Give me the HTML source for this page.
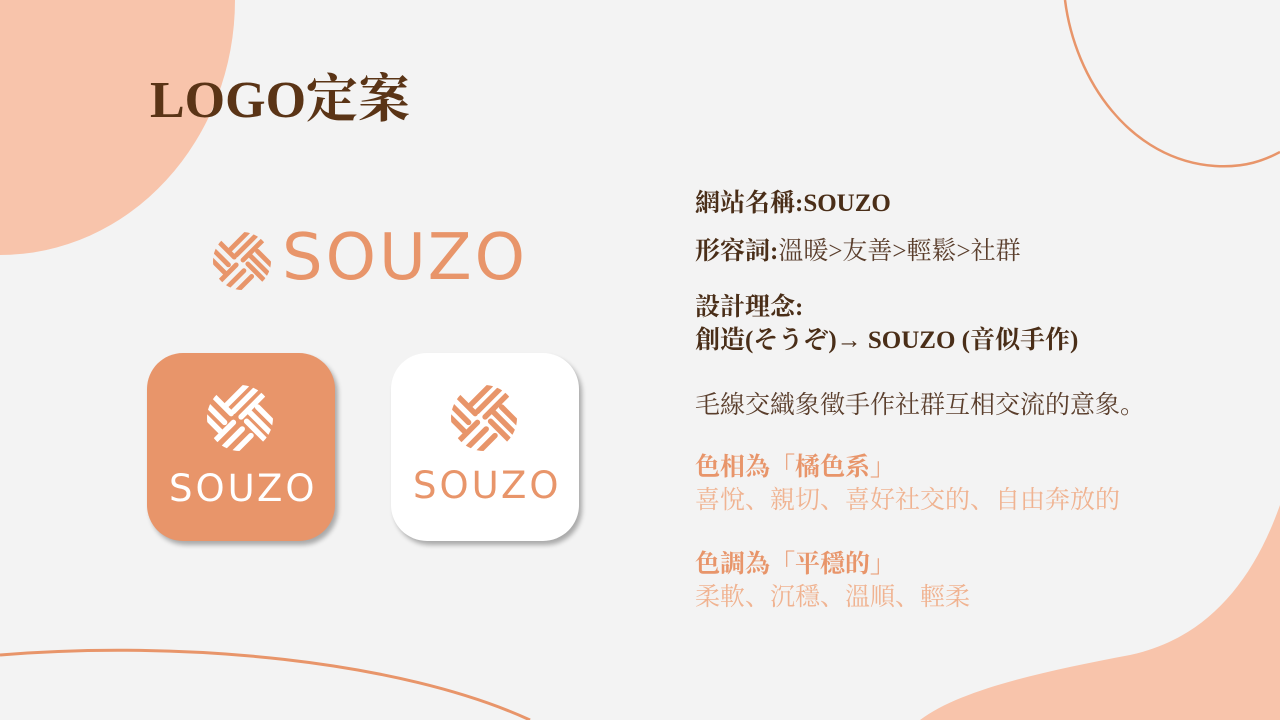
<!DOCTYPE html>
<html><head><meta charset="utf-8"><style>
html,body{margin:0;padding:0}
body{width:1280px;height:720px;background:#f3f3f3;position:relative;overflow:hidden;font-family:"Liberation Serif","Noto Serif CJK SC",serif}
.bg{position:absolute;left:0;top:0;z-index:0}
.t{position:absolute;white-space:nowrap;line-height:1;z-index:2}
.title{left:150px;top:75px;font-size:52px;font-weight:700;color:#5a3416;font-family:"Liberation Serif","Noto Serif CJK SC",serif}
.b{font-weight:bold;color:#4a2e18}
.r{color:#5a3e2c;font-weight:normal}
.o{color:#e8956a}
.ol{color:#f0b391}
.s{font-size:25px}
.logo{font-family:"DejaVu Sans","Liberation Sans",sans-serif;color:#e8956a;letter-spacing:3px}
.app{position:absolute;width:188px;height:188px;border-radius:36px;box-shadow:3px 4px 5px rgba(0,0,0,.3);z-index:1}
.mk{position:absolute;z-index:2}
</style></head><body>
<svg class="bg" width="1280" height="720" viewBox="0 0 1280 720">
<ellipse cx="0" cy="0" rx="235" ry="255" fill="#f8c4ab"/>
<path d="M1065 0 C1075 80 1130 160 1215 166 C1245 168 1265 160 1280 152" fill="none" stroke="#e8956a" stroke-width="2.5"/>
<path d="M1280 505 C1250 590 1200 640 1130 655 C1040 672 960 690 920 720 L1280 720 Z" fill="#f8c4ab"/>
<path d="M0 655 C180 640 400 660 530 720" fill="none" stroke="#e8956a" stroke-width="3"/>
</svg>
<div class="t title">LOGO定案</div>

<svg class="mk" style="left:213px;top:232px" width="58" height="58" viewBox="0 0 60 60"><clipPath id="c1"><circle cx="30" cy="30" r="30"/></clipPath><g clip-path="url(#c1)" stroke="#e8956a" stroke-linecap="round" stroke-width="5">
<line x1="18" y1="18" x2="36" y2="0"/><line x1="24" y1="24" x2="46" y2="2"/><line x1="31" y1="29" x2="54" y2="6"/>
<line x1="0" y1="18" x2="16" y2="34"/><line x1="-2" y1="28" x2="12" y2="42"/><line x1="4" y1="8" x2="22" y2="26"/>
<line x1="38" y1="24" x2="60" y2="46"/><line x1="46" y1="20" x2="62" y2="36"/><line x1="36" y1="33" x2="54" y2="51"/>
<line x1="14" y1="58" x2="32" y2="40"/><line x1="24" y1="62" x2="40" y2="46"/><line x1="6" y1="52" x2="24" y2="34"/></g></svg>
<div class="t logo" style="left:282px;top:226px;font-size:64px">SOUZO</div>

<div class="app" style="left:147px;top:353px;background:#e8956a"></div>
<svg class="mk" style="left:207px;top:385px" width="66" height="66" viewBox="0 0 60 60"><clipPath id="c2"><circle cx="30" cy="30" r="30"/></clipPath><g clip-path="url(#c2)" stroke="#fff" stroke-linecap="round" stroke-width="5">
<line x1="18" y1="18" x2="36" y2="0"/><line x1="24" y1="24" x2="46" y2="2"/><line x1="31" y1="29" x2="54" y2="6"/>
<line x1="0" y1="18" x2="16" y2="34"/><line x1="-2" y1="28" x2="12" y2="42"/><line x1="4" y1="8" x2="22" y2="26"/>
<line x1="38" y1="24" x2="60" y2="46"/><line x1="46" y1="20" x2="62" y2="36"/><line x1="36" y1="33" x2="54" y2="51"/>
<line x1="14" y1="58" x2="32" y2="40"/><line x1="24" y1="62" x2="40" y2="46"/><line x1="6" y1="52" x2="24" y2="34"/></g></svg>
<div class="t logo" style="left:169px;top:470px;font-size:37px;color:#fff">SOUZO</div>

<div class="app" style="left:391px;top:353px;background:#fff"></div>
<svg class="mk" style="left:451px;top:385px" width="66" height="66" viewBox="0 0 60 60"><clipPath id="c3"><circle cx="30" cy="30" r="30"/></clipPath><g clip-path="url(#c3)" stroke="#e8956a" stroke-linecap="round" stroke-width="5">
<line x1="18" y1="18" x2="36" y2="0"/><line x1="24" y1="24" x2="46" y2="2"/><line x1="31" y1="29" x2="54" y2="6"/>
<line x1="0" y1="18" x2="16" y2="34"/><line x1="-2" y1="28" x2="12" y2="42"/><line x1="4" y1="8" x2="22" y2="26"/>
<line x1="38" y1="24" x2="60" y2="46"/><line x1="46" y1="20" x2="62" y2="36"/><line x1="36" y1="33" x2="54" y2="51"/>
<line x1="14" y1="58" x2="32" y2="40"/><line x1="24" y1="62" x2="40" y2="46"/><line x1="6" y1="52" x2="24" y2="34"/></g></svg>
<div class="t logo" style="left:413px;top:467px;font-size:37px">SOUZO</div>

<div class="t s b" style="left:695px;top:191px">網站名稱:SOUZO</div>
<div class="t s b" style="left:695px;top:239px">形容詞:<span class="r">溫暖&gt;友善&gt;輕鬆&gt;社群</span></div>
<div class="t s b" style="left:695px;top:295px">設計理念:</div>
<div class="t s b" style="left:695px;top:328px">創造(そうぞ)→ SOUZO (音似手作)</div>
<div class="t s r" style="left:695px;top:393px">毛線交織象徵手作社群互相交流的意象。</div>
<div class="t s b o" style="left:695px;top:455px">色相為「橘色系」</div>
<div class="t s ol" style="left:695px;top:488px">喜悅、親切、喜好社交的、自由奔放的</div>
<div class="t s b o" style="left:695px;top:552px">色調為「平穩的」</div>
<div class="t s ol" style="left:695px;top:585px">柔軟、沉穩、溫順、輕柔</div>
</body></html>
